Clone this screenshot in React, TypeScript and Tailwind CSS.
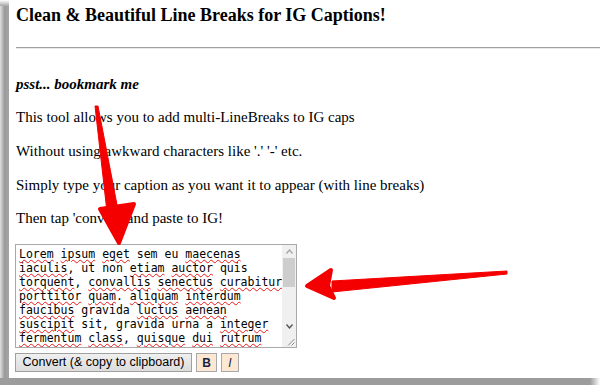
import React from "react";

const lines: string[] = [
  "Lorem ipsum eget sem eu maecenas",
  "iaculis, ut non etiam auctor quis",
  "torquent, convallis senectus curabitur",
  "porttitor quam. aliquam interdum",
  "faucibus gravida luctus aenean",
  "suscipit sit, gravida urna a integer",
  "fermentum class, quisque dui rutrum",
];

const misspelled = new Set([
  "Lorem", "ipsum", "eget", "maecenas", "iaculis", "etiam", "auctor",
  "torquent", "convallis", "senectus", "curabitur", "porttitor", "quam",
  "aliquam", "interdum", "faucibus", "luctus", "aenean", "suscipit",
  "integer", "fermentum", "class", "quisque", "dui", "rutrum",
]);

function Line({ text }: { text: string }) {
  const parts = text.split(" ");
  return (
    <div className="whitespace-pre h-[14px] leading-[14px]">
      {parts.map((p, i) => {
        const m = p.match(/^([A-Za-z]+)(.*)$/);
        const word = m ? m[1] : p;
        const rest = m ? m[2] : "";
        const bad = misspelled.has(word);
        return (
          <React.Fragment key={i}>
            {bad ? (
              <span className="underline decoration-wavy decoration-[#e81818] decoration-[1px] underline-offset-[1px]">
                {word}
              </span>
            ) : (
              <span>{word}</span>
            )}
            {rest}
            {i < parts.length - 1 ? " " : ""}
          </React.Fragment>
        );
      })}
    </div>
  );
}

export default function App() {
  const serif = { fontFamily: '"Liberation Serif", "Times New Roman", serif' };
  return (
    <div className="w-[600px] h-[385px] relative overflow-hidden bg-white flex flex-col">
      <div className="flex flex-1 min-h-0">
        <div className="w-[9px] flex flex-col">
          <div className="h-[6px] bg-gradient-to-b from-white to-[#a8a8a8]" />
          <div className="flex-1 bg-gradient-to-r from-[#e0e0e0] via-[#9c9c9c] to-[#a4a4a4]" />
        </div>
        <div className="flex-1 pl-[7px] text-black" style={serif}>
          <h3 className="text-[18px] font-bold leading-[22px] pt-[4px]">
            Clean &amp; Beautiful Line Breaks for IG Captions!
          </h3>
          <div className="mt-[21px] h-[2px] border-t border-t-[#a0a0a0] border-b border-b-[#e8e8e8]" />
          <p className="mt-[26px] text-[15px] leading-[18px] font-bold italic">psst... bookmark me</p>
          <p className="mt-[15px] text-[15px] leading-[18px]">This tool allows you to add multi-LineBreaks to IG caps</p>
          <p className="mt-[16px] text-[15px] leading-[18px]">Without using awkward characters like '.' '-' etc.</p>
          <p className="mt-[16px] text-[15px] leading-[18px]">Simply type your caption as you want it to appear (with line breaks)</p>
          <p className="mt-[15px] text-[15px] leading-[18px]">Then tap 'convert' and paste to IG!</p>
          <div className="mt-[17px] ml-[-1px] w-[282px] h-[104px] border border-[#a9a9a9] flex">
            <div
              className="flex-1 overflow-hidden pl-[3px] pt-[2px] text-[11.5px] text-black"
              style={{ fontFamily: '"DejaVu Sans Mono", "Liberation Mono", monospace' }}
            >
              {lines.map((l, i) => (
                <Line key={i} text={l} />
              ))}
            </div>
            <div className="w-[14px] flex flex-col bg-[#f0f0f0]">
              <div className="h-[13px] flex items-center justify-center">
                <svg width="7" height="5" viewBox="0 0 7 5">
                  <path d="M0.5 4.5 L3.5 1 L6.5 4.5" fill="none" stroke="#a3a3a3" strokeWidth="1.2" />
                </svg>
              </div>
              <div className="h-[29px] mx-[1px] bg-[#cdcdcd]" />
              <div className="flex-1" />
              <div className="h-[14px] flex items-center justify-center">
                <svg width="7" height="5" viewBox="0 0 7 5">
                  <path d="M0.5 0.5 L3.5 4 L6.5 0.5" fill="none" stroke="#505050" strokeWidth="1.3" />
                </svg>
              </div>
              <div className="h-[14px] bg-[#f0f0f0] flex items-end justify-end">
                <svg width="8" height="8" viewBox="0 0 8 8" className="mb-[1px] mr-[1px]">
                  <path d="M7.5 1 L1 7.5 M7.5 4.5 L4.5 7.5" stroke="#8a8a8a" strokeWidth="1" />
                </svg>
              </div>
            </div>
          </div>
          <div
            className="mt-[5px] ml-[-1px] flex gap-[4px] text-[12.5px]"
            style={{ fontFamily: '"Liberation Sans", Arial, sans-serif' }}
          >
            <div className="h-[19px] w-[177px] border border-[#a0a0a0] bg-gradient-to-b from-[#f0f0f0] to-[#dcdcdc] flex items-center justify-center text-black">
              Convert (&amp; copy to clipboard)
            </div>
            <div className="h-[19px] w-[21px] border border-[#a8a8a8] bg-[#fde9d3] font-bold text-[12px] text-[#1a2340] flex items-center justify-center">
              B
            </div>
            <div className="h-[19px] w-[18px] border border-[#a8a8a8] bg-[#fde9d3] italic text-[12px] text-[#1a2340] flex items-center justify-center">
              I
            </div>
          </div>
        </div>
      </div>
      <div className="h-[7px] flex">
        <div className="flex-1 bg-[#9c9c9c]" />
        <div className="w-[10px] bg-gradient-to-r from-[#9c9c9c] to-white" />
      </div>

      <svg className="absolute inset-0 pointer-events-none" width="600" height="385" viewBox="0 0 600 385">
        <g fill="#f40000" stroke="#f40000" strokeLinejoin="round">
          <polygon points="95,106 98,106 118,210 107,212" strokeWidth="1" />
          <polygon points="100,209 134,204 119,243" strokeWidth="4" />
          <polygon points="507,271 507,274 332,292 332,281" strokeWidth="1" />
          <polygon points="307,286 331,270 328,286 334,298" strokeWidth="4" />
        </g>
      </svg>
    </div>
  );
}
